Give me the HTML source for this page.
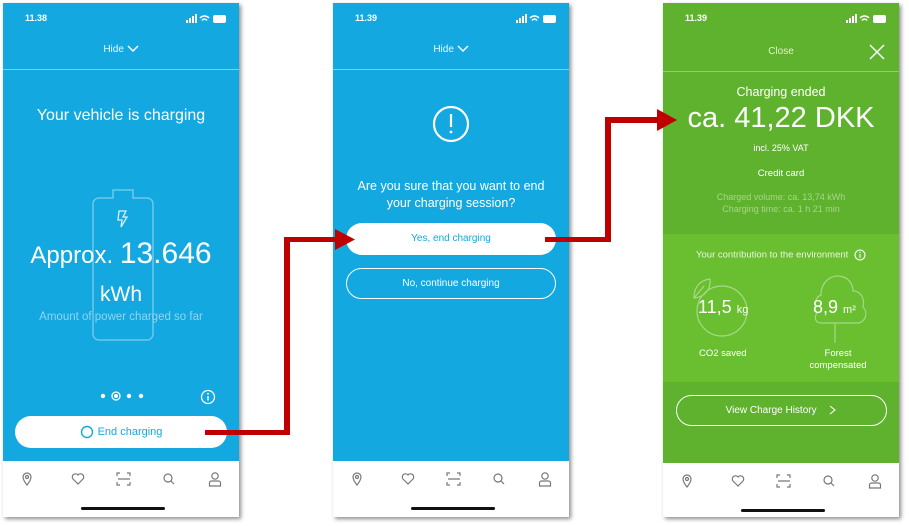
<!DOCTYPE html>
<html><head><meta charset="utf-8"><style>
*{margin:0;padding:0;box-sizing:border-box}
body{width:909px;height:526px;background:#fff;position:relative;overflow:hidden;font-family:"Liberation Sans",sans-serif;color:#fff}
.ph{position:absolute;top:3px;width:236px;height:514px;box-shadow:2px 2px 4px rgba(0,0,0,.45);overflow:hidden}
.blue{background:#13a8e0}
.a{position:absolute}
.c{position:absolute;left:0;right:0;text-align:center}
.nav{position:absolute;left:0;right:0;top:458px;height:56px;background:#fff}
.nav svg{position:absolute;top:10px}
.bar{position:absolute;left:78px;top:46px;width:84px;height:3px;background:#111;border-radius:2px}
.st{position:absolute;top:10px;left:22px;font-size:9px;font-weight:bold;color:#fff}
.btn{position:absolute;border-radius:17px;font-size:10px;text-align:center}
.r{position:absolute;background:#c00000}
</style></head><body>

<!-- phone 1 -->
<div class="ph blue" style="left:3px">
<div class="st">11.38</div>
<svg class="a" style="left:183px;top:11px" width="45" height="10"><rect x="0" y="6" width="2" height="3" fill="#fff"/><rect x="3" y="4" width="2" height="5" fill="#fff"/><rect x="6" y="2" width="2" height="7" fill="#fff"/><rect x="9" y="0" width="2" height="9" fill="#fff"/><path d="M14 4a6 6 0 0 1 9 0M16 6.5a3 3 0 0 1 5 0" stroke="#fff" fill="none" stroke-width="1.5"/><rect x="27" y="1" width="13" height="8" rx="2" fill="#fff"/></svg>
<div class="c" style="top:41px;font-size:10px;color:#dff">Hide <svg width="12" height="8" style="vertical-align:middle"><path d="M1 1l5 5 5-5" stroke="#fff" fill="none" stroke-width="1.5"/></svg></div>
<div class="a" style="left:0;right:0;top:66px;height:1px;background:#7fd0f0"></div>
<div class="c" style="top:104px;font-size:16px">Your vehicle is charging</div>
<svg class="a" style="left:88px;top:186px" width="64" height="152"><path d="M22 1h20v8h14a6 6 0 0 1 6 6v130a6 6 0 0 1-6 6H8a6 6 0 0 1-6-6V15a6 6 0 0 1 6-6h14z" stroke="#6cc7ec" fill="none" stroke-width="1.5"/><path d="M28 22l7 0-3 6 4 0-6 10 1-7-4 0z" stroke="#d8f0fb" fill="none" stroke-width="1.3"/></svg>
<div class="c" style="top:234px;font-size:24px">Approx. <span style="font-size:30px">13.646</span></div>
<div class="c" style="top:280px;font-size:21px">kWh</div>
<div class="c" style="top:308px;font-size:11.5px;color:#8fd5f2">Amount of power charged so far</div>
<svg class="a" style="left:95px;top:386px" width="50" height="14"><circle cx="5" cy="7" r="2.2" fill="#fff"/><circle cx="18" cy="7" r="4" stroke="#fff" fill="none" stroke-width="1.3"/><circle cx="18" cy="7" r="2" fill="#fff"/><circle cx="31" cy="7" r="2.2" fill="#fff"/><circle cx="43" cy="7" r="2.2" fill="#fff"/></svg>
<svg class="a" style="left:197px;top:386px" width="16" height="16"><circle cx="8" cy="8" r="6.5" stroke="#fff" fill="none" stroke-width="1.3"/><path d="M8 7v4.5" stroke="#fff" stroke-width="1.4"/><circle cx="8" cy="4.8" r=".9" fill="#fff"/></svg>
<div class="btn" style="left:12px;top:413px;width:212px;height:32px;background:#fff;color:#13a8e0;line-height:32px;font-size:11px"><svg width="14" height="14" style="vertical-align:middle;margin-right:4px"><circle cx="7" cy="7" r="5.5" stroke="#13a8e0" fill="none" stroke-width="1.4"/></svg>End charging</div>
<div class="nav"><svg style="left:18px" width="210" height="18" fill="none" stroke="#777" stroke-width="1.2"><path d="M6 14C2 9 2 7 2 6a4 4 0 0 1 8 0c0 1 0 3-4 8z"/><circle cx="6" cy="6" r="1.5"/><path d="M57 13l-5-5a3 3 0 0 1 5-4 3 3 0 0 1 5 4z"/><path d="M96 5V2h3M106 2h3v3M109 11v3h-3M99 14h-3v-3M97 8h12"/><circle cx="147" cy="7" r="4"/><path d="M150 10l3 3"/><circle cx="194" cy="5" r="3.2"/><path d="M188.5 15v-3a2 2 0 0 1 2-2h7a2 2 0 0 1 2 2v3z"/></svg><div class="bar"></div></div>
</div>

<!-- phone 2 -->
<div class="ph blue" style="left:333px">
<div class="st">11.39</div>
<svg class="a" style="left:183px;top:11px" width="45" height="10"><rect x="0" y="6" width="2" height="3" fill="#fff"/><rect x="3" y="4" width="2" height="5" fill="#fff"/><rect x="6" y="2" width="2" height="7" fill="#fff"/><rect x="9" y="0" width="2" height="9" fill="#fff"/><path d="M14 4a6 6 0 0 1 9 0M16 6.5a3 3 0 0 1 5 0" stroke="#fff" fill="none" stroke-width="1.5"/><rect x="27" y="1" width="13" height="8" rx="2" fill="#fff"/></svg>
<div class="c" style="top:41px;font-size:10px;color:#dff">Hide <svg width="12" height="8" style="vertical-align:middle"><path d="M1 1l5 5 5-5" stroke="#fff" fill="none" stroke-width="1.5"/></svg></div>
<div class="a" style="left:0;right:0;top:66px;height:1px;background:#7fd0f0"></div>
<svg class="a" style="left:99px;top:102px" width="38" height="38"><circle cx="19" cy="19" r="17" stroke="#fff" fill="none" stroke-width="2.2"/><path d="M19 9v13" stroke="#fff" stroke-width="2.2"/><circle cx="19" cy="27" r="1.4" fill="#fff"/></svg>
<div class="c" style="top:175px;font-size:12.5px;line-height:17px">Are you sure that you want to end<br>your charging session?</div>
<div class="btn" style="left:13px;top:220px;width:210px;height:32px;background:#fff;color:#13a8e0;line-height:32px">Yes, end charging</div>
<div class="btn" style="left:13px;top:265px;width:210px;height:31px;border:1.3px solid #fff;line-height:29px">No, continue charging</div>
<div class="nav"><svg style="left:18px" width="210" height="18" fill="none" stroke="#777" stroke-width="1.2"><path d="M6 14C2 9 2 7 2 6a4 4 0 0 1 8 0c0 1 0 3-4 8z"/><circle cx="6" cy="6" r="1.5"/><path d="M57 13l-5-5a3 3 0 0 1 5-4 3 3 0 0 1 5 4z"/><path d="M96 5V2h3M106 2h3v3M109 11v3h-3M99 14h-3v-3M97 8h12"/><circle cx="147" cy="7" r="4"/><path d="M150 10l3 3"/><circle cx="194" cy="5" r="3.2"/><path d="M188.5 15v-3a2 2 0 0 1 2-2h7a2 2 0 0 1 2 2v3z"/></svg><div class="bar"></div></div>
</div>

<!-- phone 3 -->
<div class="ph" style="left:663px;background:#5fb22e">
<div class="st">11.39</div>
<svg class="a" style="left:183px;top:11px" width="45" height="10"><rect x="0" y="6" width="2" height="3" fill="#fff"/><rect x="3" y="4" width="2" height="5" fill="#fff"/><rect x="6" y="2" width="2" height="7" fill="#fff"/><rect x="9" y="0" width="2" height="9" fill="#fff"/><path d="M14 4a6 6 0 0 1 9 0M16 6.5a3 3 0 0 1 5 0" stroke="#fff" fill="none" stroke-width="1.5"/><rect x="27" y="1" width="13" height="8" rx="2" fill="#fff"/></svg>
<div class="c" style="top:43px;font-size:10px;color:#e0f0d5">Close</div>
<svg class="a" style="left:206px;top:41px" width="16" height="16"><path d="M1 1l14 14M15 1L1 15" stroke="#fff" stroke-width="1.5"/></svg>
<div class="a" style="left:0;right:0;top:68px;height:1px;background:#8fcc6e"></div>
<div class="c" style="top:82px;font-size:12.5px">Charging ended</div>
<div class="c" style="top:99px;font-size:29px">ca. 41,22 DKK</div>
<div class="c" style="top:140px;font-size:9px">incl. 25% VAT</div>
<div class="c" style="top:165px;font-size:9.5px">Credit card</div>
<div class="c" style="top:188px;font-size:9px;line-height:12px;color:#a6d68c">Charged volume: ca. 13,74 kWh<br>Charging time: ca. 1 h 21 min</div>
<div class="a" style="left:0;right:0;top:231px;height:148px;background:#6abf30"></div>
<div class="c" style="top:246px;font-size:9.5px;color:#eaf6e0">Your contribution to the environment <svg width="12" height="12" style="vertical-align:middle;margin-left:3px"><circle cx="6" cy="6" r="5" stroke="#fff" fill="none" stroke-width="1.1"/><path d="M6 5v4" stroke="#fff"/><circle cx="6" cy="3.4" r=".7" fill="#fff"/></svg></div>
<svg class="a" style="left:25px;top:270px" width="70" height="75" fill="none" stroke="#a6d88a" stroke-width="1.2"><circle cx="34" cy="38" r="25"/><path d="M6 25C6 12 14 7 22 6c1 10-5 18-16 19zM6 25l10-12"/></svg>
<div class="a" style="left:35px;top:294px;font-size:18px">11,5 <span style="font-size:11px">kg</span></div>
<div class="a" style="left:36px;top:345px;font-size:9.5px">CO2 saved</div>
<svg class="a" style="left:150px;top:268px" width="60" height="75" fill="none" stroke="#a6d88a" stroke-width="1.2"><path d="M22 52H8c-6 0-7-6-4-10C0 36 2 26 8 24 8 10 20 2 30 6c8 2 10 10 10 14 8 0 12 8 10 16 6 6 2 16-6 16H22M22 52v20"/></svg>
<div class="a" style="left:150px;top:294px;font-size:18px">8,9 <span style="font-size:11px">m²</span></div>
<div class="a" style="left:140px;top:345px;width:70px;text-align:center;font-size:9.5px;line-height:12px">Forest<br>compensated</div>
<div class="btn" style="left:13px;top:392px;width:211px;height:31px;border:1.3px solid #fff;line-height:29px">View Charge History <svg width="8" height="10" style="vertical-align:middle;margin-left:10px"><path d="M1 1l5 4-5 4" stroke="#fff" fill="none" stroke-width="1.1"/></svg></div>
<div class="nav" style="top:460px"><svg style="left:18px" width="210" height="18" fill="none" stroke="#777" stroke-width="1.2"><path d="M6 14C2 9 2 7 2 6a4 4 0 0 1 8 0c0 1 0 3-4 8z"/><circle cx="6" cy="6" r="1.5"/><path d="M57 13l-5-5a3 3 0 0 1 5-4 3 3 0 0 1 5 4z"/><path d="M96 5V2h3M106 2h3v3M109 11v3h-3M99 14h-3v-3M97 8h12"/><circle cx="147" cy="7" r="4"/><path d="M150 10l3 3"/><circle cx="194" cy="5" r="3.2"/><path d="M188.5 15v-3a2 2 0 0 1 2-2h7a2 2 0 0 1 2 2v3z"/></svg><div class="bar"></div></div>
</div>

<!-- arrows -->
<div class="r" style="left:205px;top:430px;width:85px;height:5px"></div>
<div class="r" style="left:284px;top:237px;width:6px;height:198px"></div>
<div class="r" style="left:284px;top:237px;width:55px;height:5px"></div>
<svg class="a" style="left:335px;top:229px" width="20" height="21"><path d="M0 0L20 10.5 0 21z" fill="#c00000"/></svg>
<div class="r" style="left:545px;top:237px;width:66px;height:5px"></div>
<div class="r" style="left:605px;top:117px;width:6px;height:125px"></div>
<div class="r" style="left:605px;top:117px;width:56px;height:6px"></div>
<svg class="a" style="left:657px;top:109px" width="20" height="22"><path d="M0 0L20 11 0 22z" fill="#c00000"/></svg>
</body></html>
